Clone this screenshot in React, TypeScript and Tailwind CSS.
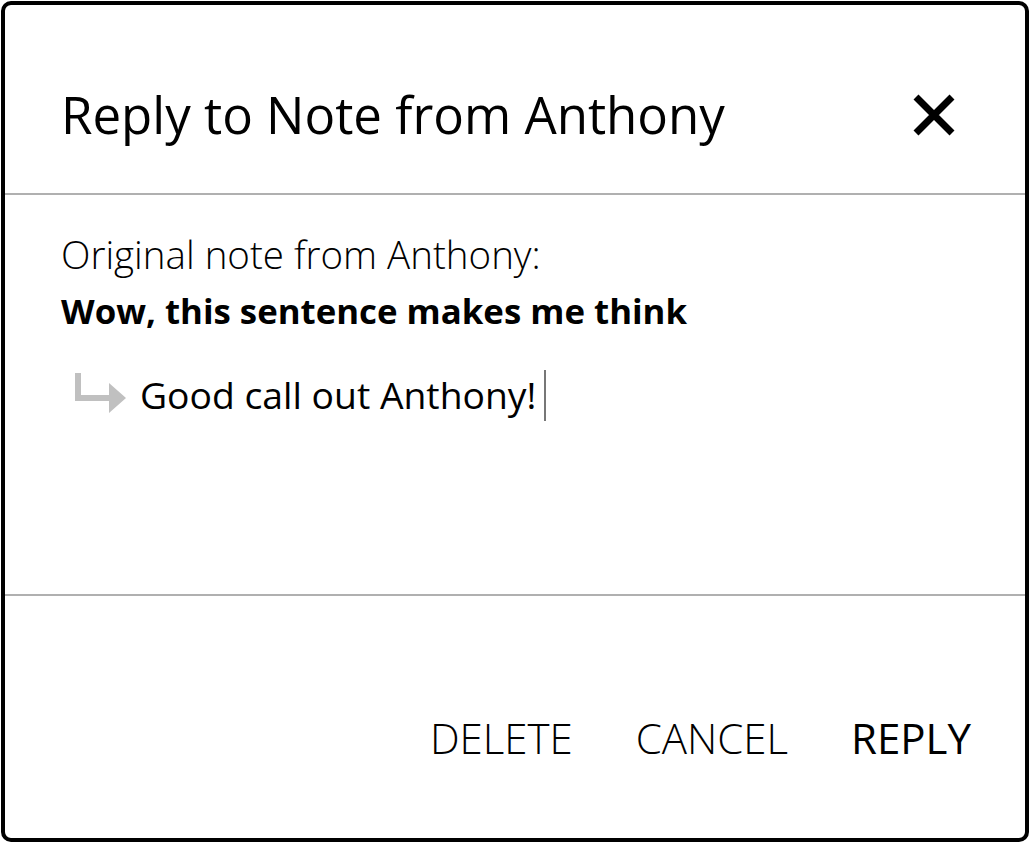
import React from "react";

const font = { fontFamily: '"Open Sans", "Noto Sans", sans-serif' };

function ReplyArrow() {
  return (
    <svg width="54" height="46" viewBox="0 0 54 46" className="shrink-0">
      <path d="M1 1 H7 V23 H35 V11 L52 26 L35 41 V29 H1 Z" fill="#c0c0c0" />
    </svg>
  );
}

export default function App() {
  return (
    <div className="w-[1030px] h-[843px] bg-white p-[1px]" style={font}>
      <div className="flex h-full w-full flex-col rounded-[10px] border-4 border-black bg-white">
        {/* header */}
        <div className="flex h-[188px] items-center justify-between pl-[56px] pr-[68px] pt-[31px]">
          <h1 className="text-[51px] leading-none text-black">Reply to Note from Anthony</h1>
          <button className="flex h-[46px] w-[46px] items-center justify-center">
            <svg width="44" height="44" viewBox="0 0 44 44">
              <path d="M4 4 L40 40 M40 4 L4 40" stroke="#000" strokeWidth="7" />
            </svg>
          </button>
        </div>
        <div className="h-[2px] bg-[#b0b0b0]" />

        {/* body */}
        <div className="flex h-[399px] flex-col pl-[56px] pt-[31px]">
          <p className="text-[38.5px] font-light leading-[57px] text-black">Original note from Anthony:</p>
          <p className="text-[34.8px] font-bold leading-[56px] text-black">Wow, this sentence makes me think</p>
          <div className="mt-[30px] flex items-center gap-[12px] pl-[13px]">
            <ReplyArrow />
            <span className="text-[37.3px] leading-[52px] text-black">Good call out Anthony!</span>
            <span className="-ml-[4px] h-[51px] w-[2px] bg-[#777]" />
          </div>
        </div>
        <div className="h-[2px] bg-[#b0b0b0]" />

        {/* footer */}
        <div className="flex flex-1 items-end justify-end gap-[63px] pb-[79px] pr-[54px]">
          <button className="text-[42px] font-light leading-none text-black">DELETE</button>
          <button className="text-[42px] font-light leading-none text-black">CANCEL</button>
          <button className="text-[42px] font-normal leading-none text-black">REPLY</button>
        </div>
      </div>
    </div>
  );
}
